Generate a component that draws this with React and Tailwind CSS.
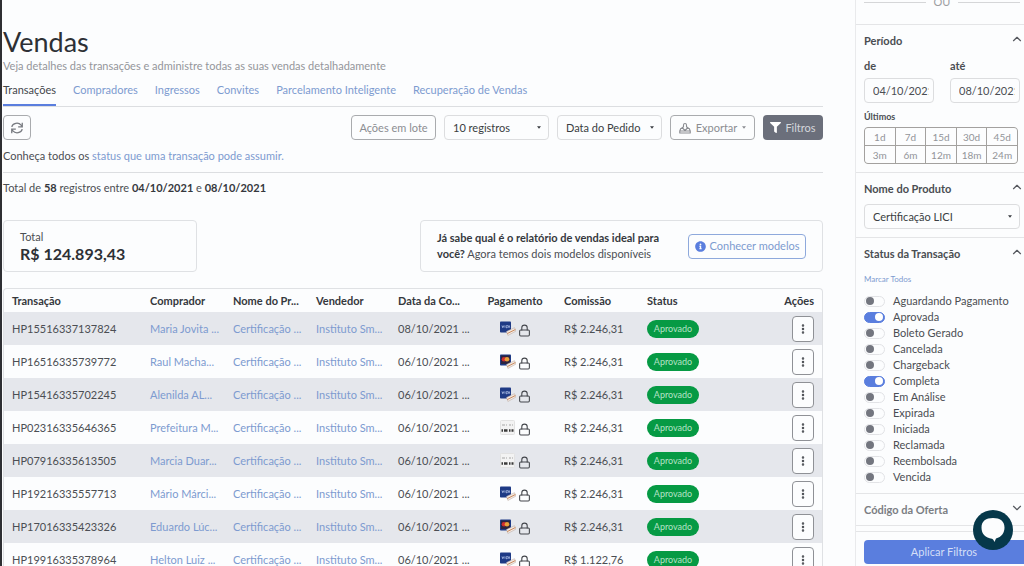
import React from 'react';
import clsx from 'clsx';
import { ChevronUp, ChevronDown, Lock, EllipsisVertical } from 'lucide-react';
import { FaFilter, FaInfoCircle } from 'react-icons/fa';

const tabs = [
  'Transações',
  'Compradores',
  'Ingressos',
  'Convites',
  'Parcelamento Inteligente',
  'Recuperação de Vendas',
];

const sales = [
  { id: 'HP15516337137824', buyer: 'Maria Jovita ...', date: '08/10/2021 ...', payment: 'visa', amount: 'R$ 2.246,31' },
  { id: 'HP16516335739772', buyer: 'Raul Macha...', date: '06/10/2021 ...', payment: 'master', amount: 'R$ 2.246,31' },
  { id: 'HP15416335702245', buyer: 'Alenilda AL...', date: '06/10/2021 ...', payment: 'visa', amount: 'R$ 2.246,31' },
  { id: 'HP02316335646365', buyer: 'Prefeitura M...', date: '06/10/2021 ...', payment: 'boleto', amount: 'R$ 2.246,31' },
  { id: 'HP07916335613505', buyer: 'Marcia Duar...', date: '06/10/2021 ...', payment: 'boleto', amount: 'R$ 2.246,31' },
  { id: 'HP19216335557713', buyer: 'Mário Márci...', date: '06/10/2021 ...', payment: 'visa', amount: 'R$ 2.246,31' },
  { id: 'HP17016335423326', buyer: 'Eduardo Lúc...', date: '06/10/2021 ...', payment: 'master', amount: 'R$ 2.246,31' },
  { id: 'HP19916335378964', buyer: 'Helton Luiz ...', date: '06/10/2021 ...', payment: 'visa', amount: 'R$ 1.122,76' },
];

const ranges = ['1d', '7d', '15d', '30d', '45d', '3m', '6m', '12m', '18m', '24m'];

const statuses = [
  { label: 'Aguardando Pagamento' },
  { label: 'Aprovada', on: true },
  { label: 'Boleto Gerado' },
  { label: 'Cancelada' },
  { label: 'Chargeback' },
  { label: 'Completa', on: true },
  { label: 'Em Análise' },
  { label: 'Expirada' },
  { label: 'Iniciada' },
  { label: 'Reclamada' },
  { label: 'Reembolsada' },
  { label: 'Vencida' },
];

function Caret({ className }) {
  return (
    <svg viewBox="0 0 6 4" className={clsx('h-[3px] w-1 fill-current', className)} aria-hidden="true">
      <path d="M0 0h6L3 4z" />
    </svg>
  );
}

function Select({ label, value, className }) {
  return (
    <div className={clsx('relative', className)}>
      <select
        aria-label={label}
        defaultValue={value}
        className="h-[25px] w-full appearance-none rounded-sm border border-[#dcdddf] bg-transparent px-2 text-[#3a3d42]"
      >
        <option>{value}</option>
      </select>
      <Caret className="pointer-events-none absolute right-2 top-[11px] text-[#3a3d42]" />
    </div>
  );
}

function PaymentIcon({ type }) {
  if (type === 'boleto') {
    return (
      <svg viewBox="0 0 16 16" className="size-4" aria-hidden="true">
        <rect x="0.5" y="0.5" width="14" height="14" rx="1" fill="#f3f3f3" stroke="#e2e2e2" />
        <path d="M2 5h3M6 5h1M9 5h2M12 5h1" stroke="#a5a5a5" strokeWidth="1.2" />
        <path d="M1.500 10.500h1.500M4 10.500h3.500M9 10.500h1.500M11.500 10.500h2" stroke="#3b3b3b" strokeWidth="2.400" />
      </svg>
    );
  }
  return (
    <svg viewBox="0 0 16 16" className="size-4" aria-hidden="true">
      <rect x="0" y="0.5" width="11" height="11" rx="0.8" fill="#1e3a85" />
      {type === 'visa' ? (
        <path d="M2 4.500l0.800 2.200 1-2.200M5 4.500v2.200M6 6.700h1.200l-0.600-2.200h1.200M8.300 6.700l0.700-2.200 0.700 2.200" stroke="#b9c9ee" strokeWidth="0.800" fill="none" />
      ) : (
        <>
          <rect x="1" y="1.500" width="9" height="8.500" fill="#2b2440" />
          <circle cx="4" cy="5.300" r="2.300" fill="#cf2f2f" />
          <circle cx="7" cy="5.300" r="2.300" fill="#e8a13a" />
        </>
      )}
      <path d="M6.500 10.500l8-3.800 1.400 3.400-8 4.400z" fill="#f2e9e3" stroke="#b9a79d" strokeWidth="0.5" />
      <path d="M7.200 12.600l8.200-4.100" stroke="#c98a5c" strokeWidth="1" />
    </svg>
  );
}

function FilterHeader({ title, closed }) {
  const Icon = closed ? ChevronDown : ChevronUp;
  return (
    <button
      type="button"
      className={clsx('flex h-[31px] w-full items-center justify-between font-bold', closed ? 'text-[#7b7e84]' : 'text-[#4a4d52]')}
    >
      {title}
      <Icon size={14} strokeWidth={2} className="-mr-1 mb-1 text-[#55585e]" />
    </button>
  );
}

function SalesTable() {
  return (
    <div className="mt-4 rounded-t-sm border border-b-0 border-[#dfe1e4]">
      <table className="w-full table-fixed whitespace-nowrap text-left">
        <colgroup>
          <col className="w-[138px]" />
          <col className="w-[83px]" />
          <col className="w-[83px]" />
          <col className="w-[82px]" />
          <col className="w-[84px]" />
          <col className="w-[82px]" />
          <col className="w-[83px]" />
          <col className="w-[83px]" />
          <col />
        </colgroup>
        <thead>
          <tr className="h-[23px] text-[#35383d]">
            <th className="px-2 font-bold">Transação</th>
            <th className="px-2 font-bold">Comprador</th>
            <th className="px-2 font-bold">Nome do Pr...</th>
            <th className="px-2 font-bold">Vendedor</th>
            <th className="px-2 font-bold">Data da Co...</th>
            <th className="text-center font-bold">Pagamento</th>
            <th className="px-2 font-bold">Comissão</th>
            <th className="px-2 font-bold">Status</th>
            <th className="px-2 text-right font-bold">Ações</th>
          </tr>
        </thead>
        <tbody>
          {sales.map((sale) => (
            <tr key={sale.id} className="h-[33px] odd:bg-[#e5e7ec]">
              <td className="px-2">{sale.id}</td>
              <td className="px-2"><a href="#comprador" className="text-[#7d9bd0]">{sale.buyer}</a></td>
              <td className="px-2"><a href="#produto" className="text-[#7d9bd0]">Certificação ...</a></td>
              <td className="px-2"><a href="#vendedor" className="text-[#7d9bd0]">Instituto Sm...</a></td>
              <td className="px-2">{sale.date}</td>
              <td>
                <div className="flex items-center justify-center gap-[2px]">
                  <PaymentIcon type={sale.payment} />
                  <Lock size={13} className="mt-1 text-[#44474c]" />
                </div>
              </td>
              <td className="px-2">{sale.amount}</td>
              <td className="px-2">
                <span className="inline-flex h-[18px] w-[52px] items-center justify-center rounded-full bg-[#069a44] text-[9px] text-[#b5e2c6]">
                  Aprovado
                </span>
              </td>
              <td className="px-2">
                <button
                  type="button"
                  aria-label="Ações"
                  className="ml-auto flex h-[26px] w-[22px] items-center justify-center rounded-sm border border-[#8f9196] bg-[#fcfdfe]"
                >
                  <EllipsisVertical size={12} strokeWidth={3} />
                </button>
              </td>
            </tr>
          ))}
        </tbody>
      </table>
    </div>
  );
}

function Filters() {
  return (
    <aside className="flex w-[169px] shrink-0 flex-col overflow-hidden border-l border-[#e9eaec]">
      {/* Divider between the search options */}
      <div className="flex h-6 shrink-0 items-start gap-2 px-2 pr-1 text-[#9c9ea2]">
        <span className="mt-[2px] h-px flex-1 bg-[#d5d6d8]" />
        <span className="h-1 text-[11px] leading-[4px]">OU</span>
        <span className="mt-[2px] h-px flex-1 bg-[#d5d6d8]" />
      </div>

      <section className="border-t border-[#e4e5e7] pb-2 pl-2 pr-1">
        <FilterHeader title="Período" />
        <div className="flex justify-between gap-4">
          <label className="w-[71px] font-bold leading-5">
            de
            <input
              type="text"
              defaultValue="04/10/2021"
              className="mt-[2px] block h-[25px] w-full rounded-sm border border-[#dcdddf] pl-2 pr-1 font-normal"
            />
          </label>
          <label className="w-[71px] font-bold leading-5">
            até
            <input
              type="text"
              defaultValue="08/10/2021"
              className="mt-[2px] block h-[25px] w-full rounded-sm border border-[#dcdddf] pl-2 pr-1 font-normal"
            />
          </label>
        </div>
        <p className="mt-2 text-[9px] font-bold leading-3">Últimos</p>
        <div className="mr-[2px] mt-1 grid grid-cols-5 gap-px overflow-hidden rounded-sm border border-[#a3a19f] bg-[#a3a19f]">
          {ranges.map((range) => (
            <button key={range} type="button" className="h-[17px] bg-[#fcfdfe] text-[10px] text-[#929499]">
              {range}
            </button>
          ))}
        </div>
      </section>

      <section className="border-t border-[#e4e5e7] pb-2 pl-2 pr-1">
        <FilterHeader title="Nome do Produto" />
        <Select label="Nome do Produto" value="Certificação LICI" />
      </section>

      <section className="border-t border-[#e4e5e7] pb-2 pl-2 pr-1">
        <FilterHeader title="Status da Transação" />
        <a href="#todos" className="mt-1 block text-[8px] leading-3 text-[#7d9bd0]">Marcar Todos</a>
        <div className="mt-2">
          {statuses.map((status) => (
            <label key={status.label} className="flex h-4 items-center gap-2">
              <input
                type="checkbox"
                role="switch"
                defaultChecked={status.on}
                className="peer sr-only"
              />
              <span className="flex h-[11px] w-[21px] items-center rounded-full border border-[#e2e3e6] px-px peer-checked:justify-end peer-checked:border-[#5a7ede] peer-checked:bg-[#5a7ede] peer-checked:*:bg-white">
                <span className="size-2 rounded-full bg-[#73767f]" />
              </span>
              <span className="whitespace-nowrap">{status.label}</span>
            </label>
          ))}
        </div>
      </section>

      <section className="border-y border-[#e4e5e7] pl-2 pr-1">
        <FilterHeader title="Código da Oferta" closed />
      </section>

      <div className="mt-auto border-t border-[#e4e5e7] pb-[2px] pl-2 pt-2">
        <button type="button" className="h-6 w-full rounded-l-sm bg-[#5a7ede] text-[#d5dff7]">
          Aplicar Filtros
        </button>
      </div>
    </aside>
  );
}

export default function App() {
  return (
    <div className="flex h-screen justify-between gap-8 overflow-hidden border-l-2 border-[#2e2f33] bg-[#fcfdfe] font-[Lato,sans-serif] text-[11px] leading-4 text-[#4b4e53]">
      <main className="min-w-0 flex-1 pl-px pt-6">
        <h1 className="text-[27px] leading-9 text-[#2d3035]">Vendas</h1>
        <p className="leading-3 text-[#94969b]">
          Veja detalhes das transações e administre todas as suas vendas detalhadamente
        </p>

        <nav className="mt-[10px] flex gap-[17px] border-b border-[#dcdee1]">
          {tabs.map((tab, i) => (
            <a
              key={tab}
              href="#vendas"
              className={clsx(
                'whitespace-nowrap border-b-2 pb-[6px]',
                i === 0 ? 'border-[#5a7ede] text-[#44474c]' : 'border-transparent text-[#7d9bd0]'
              )}
            >
              {tab}
            </a>
          ))}
        </nav>

        <div className="mt-2 flex items-center gap-2">
          <button
            type="button"
            aria-label="Atualizar"
            className="mr-auto flex h-[25px] w-7 items-center justify-center rounded-sm border border-[#a9abae] text-[#777a80]"
          >
            <svg viewBox="0 0 24 24" className="size-3.5" fill="none" stroke="currentColor" strokeWidth="2.2">
              <path d="M3 10a9 8 0 0 1 16-3l2 2M21 3v7h-7M21 14a9 8 0 0 1-16 3l-2-2M3 21v-7h7" />
            </svg>
          </button>
          <button type="button" className="h-[25px] w-[85px] whitespace-nowrap rounded-sm border border-[#a9abae] text-[#8b8d92]">
            Ações em lote
          </button>
          <Select label="Registros por página" value="10 registros" className="w-[105px]" />
          <Select label="Ordenar por" value="Data do Pedido" className="w-[105px]" />
          <button
            type="button"
            className="flex h-[25px] w-[85px] items-center justify-between rounded-sm border border-[#a9abae] px-2 text-[#8b8d92]"
          >
            <svg viewBox="0 0 24 24" className="size-3" fill="none" stroke="currentColor" strokeWidth="2.200" strokeLinejoin="round">
              <path d="M8 13H3.500L1.500 18v4h21v-4l-2-5H16M12 17l-6-6 3-1V6a3 3 0 0 1 6 0v4l3 1zM2 18h20" />
            </svg>
            Exportar
            <Caret />
          </button>
          <button
            type="button"
            className="flex h-[25px] w-[60px] items-center justify-center gap-1 rounded-sm bg-[#6b6f7b] text-[#d5d7dc]"
          >
            <FaFilter size={11} className="text-white" />
            Filtros
          </button>
        </div>

        <p className="mt-2 border-b border-[#dcdee1] pb-2">
          Conheça todos os <a href="#status" className="text-[#7d9bd0]">status que uma transação pode assumir.</a>
        </p>
        <p className="mt-2 leading-[14px]">
          Total de <b className="text-[#35383d]">58</b> registros entre{' '}
          <b className="text-[#35383d]">04/10/2021</b> e{' '}
          <b className="text-[#35383d]">08/10/2021</b>
        </p>

        <div className="mt-[25px] flex justify-between">
          <div className="flex h-[52px] w-[194px] flex-col justify-center rounded-sm border border-[#dfe1e4] px-4">
            <span>Total</span>
            <strong className="text-[16px] leading-[18px] text-[#2d3035]">R$ 124.893,43</strong>
          </div>
          <div className="flex h-[52px] w-[403px] items-center justify-between rounded-sm border border-[#dfe1e4] px-4">
            <p className="whitespace-nowrap">
              <b className="text-[#35383d]">
                Já sabe qual é o relatório de vendas ideal para
                <br />
                você?
              </b>{' '}
              Agora temos dois modelos disponíveis
            </p>
            <button
              type="button"
              className="flex h-[25px] w-[118px] items-center justify-center gap-1 whitespace-nowrap rounded-sm border border-[#8ea9dc] text-[#7d9bd0]"
            >
              <FaInfoCircle size={11} className="text-[#5a7ede]" />
              Conhecer modelos
            </button>
          </div>
        </div>

        <SalesTable />
      </main>

      <Filters />

      <button
        type="button"
        aria-label="Abrir chat"
        className="fixed bottom-4 right-[11px] flex size-10 items-center justify-center rounded-full bg-[#06384a] text-[#fcfdfe]"
      >
        <svg viewBox="0 0 24 24" className="size-6" fill="currentColor" aria-hidden="true">
          <path d="M12 0C19 0 23.500 3 23.500 9.500c0 5.500-3 9.500-8.500 11L13.500 24c-0.600-1.500-1.300-2.600-2.500-3.200C4.500 20 0.500 16 0.500 9.500 0.500 3 5 0 12 0z" />
        </svg>
      </button>
    </div>
  );
}
